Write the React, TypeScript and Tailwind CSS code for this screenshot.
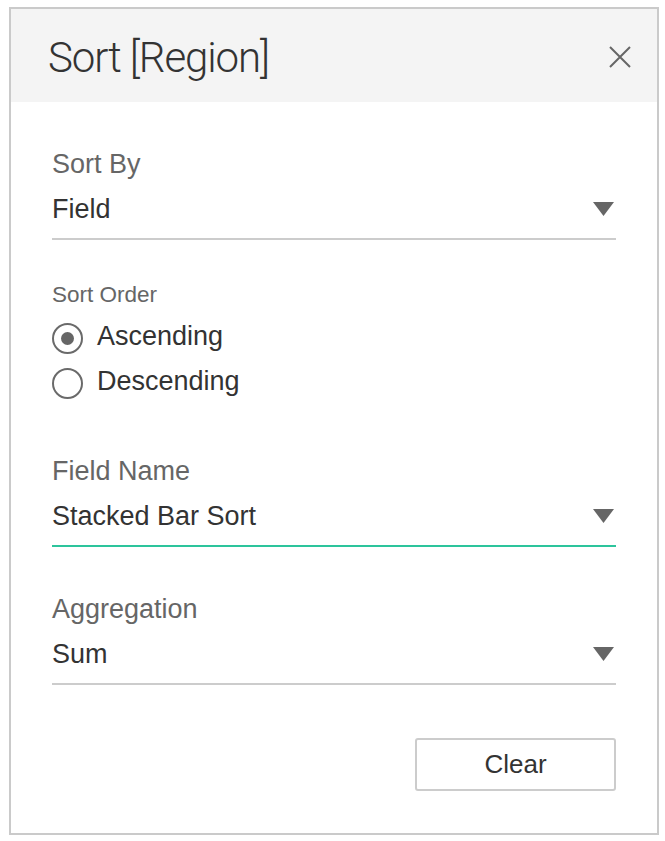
import React from 'react';

interface SelectFieldProps {
    label: string;
    value: string;
    active?: boolean;
    className?: string;
}

const Caret: React.FC = () => (
    <svg width="21" height="14" viewBox="0 0 21 14" className="mr-[2px]">
        <path d="M0 0 H21 L10.5 14 Z" fill="#666666"/>
    </svg>
);

const SelectField: React.FC<SelectFieldProps> = ({label, value, active, className}) => (
    <div className={className}>
        <div className="text-[27px] leading-[30px] text-[#666666]">{label}</div>
        <div
            className={`mt-[15px] flex items-center justify-between border-b-2 pb-[14px] ${
                active ? 'border-[#2dc49c]' : 'border-[#cccccc]'
            }`}
        >
            <span className="text-[27px] leading-[30px] text-[#333333]">{value}</span>
            <Caret/>
        </div>
    </div>
);

const Radio: React.FC<{label: string; checked?: boolean; className?: string}> = ({label, checked, className}) => (
    <label className={`flex h-[30px] items-center gap-[14px] ${className ?? ''}`}>
        <span className="mt-[4px] flex h-[31px] w-[31px] items-center justify-center rounded-full border-2 border-[#6a6a6a]">
            {checked && <span className="h-[13px] w-[13px] rounded-full bg-[#666666]"/>}
        </span>
        <span className="text-[27px] leading-[30px] text-[#333333]">{label}</span>
    </label>
);

export default function App() {
    return (
        <div className="min-h-screen bg-white pl-[9px] pt-[7px]" style={{fontFamily: '"Liberation Sans", Arial, sans-serif'}}>
            <div className="flex h-[828px] w-[650px] flex-col border-2 border-[#cacaca]">
                <div className="flex h-[93px] items-center justify-between bg-[#f4f4f4] pl-[37px] pr-[26px]">
                    <h1
                        className="mt-[5px] text-[42px] font-light leading-none tracking-[-1.1px] text-[#333333]"
                        style={{fontFamily: 'Roboto, "Liberation Sans", sans-serif'}}
                    >
                        Sort [Region]
                    </h1>
                    <svg width="22" height="22" viewBox="0 0 22 22" className="mt-[2px]">
                        <path d="M1 1 L21 21 M21 1 L1 21" stroke="#666666" strokeWidth="2"/>
                    </svg>
                </div>

                <div className="flex flex-col px-[41px] pt-[47px]">
                    <SelectField label="Sort By" value="Field"/>

                    <div className="mt-[42px] text-[22.5px] leading-[26px] text-[#666666]">Sort Order</div>
                    <Radio label="Ascending" checked className="mt-[13px]"/>
                    <Radio label="Descending" className="mt-[15px]"/>

                    <SelectField label="Field Name" value="Stacked Bar Sort" active className="mt-[60px]"/>
                    <SelectField label="Aggregation" value="Sum" className="mt-[47px]"/>

                    <button
                        type="button"
                        className="mt-[53px] h-[53px] w-[201px] self-end rounded-[3px] border-2 border-[#cccccc] bg-white text-[26px] text-[#333333]"
                    >
                        Clear
                    </button>
                </div>
            </div>
        </div>
    );
}
